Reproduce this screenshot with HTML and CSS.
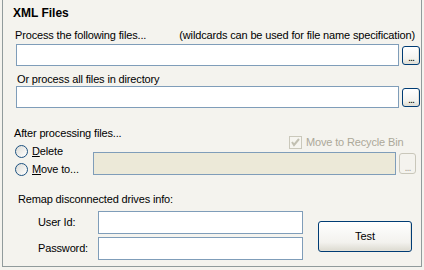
FILE: index.html
```html
<!DOCTYPE html>
<html>
<head>
    <meta charset="utf-8">
    <title>XML Files</title>
    <link rel="stylesheet" href="styles.css">
</head>
<body>
    <div class="panel">
        <div class="title">XML Files</div>

        <div class="label-row">
            <span>Process the following files...</span>
            <span>(wildcards can be used for file name specification)</span>
        </div>
        <div class="field-row">
            <div class="textbox wide"></div>
            <button class="browse">...</button>
        </div>

        <div class="label dir-label">Or process all files in directory</div>
        <div class="field-row dir-row">
            <div class="textbox wide"></div>
            <button class="browse">...</button>
        </div>

        <div class="after">
            <div class="after-left">
                <div class="label">After processing files...</div>
                <label class="radio-row"><span class="radio"></span><span><u>D</u>elete</span></label>
                <label class="radio-row"><span class="radio"></span><span><u>M</u>ove to...</span></label>
            </div>
            <div class="after-right">
                <label class="check-row">
                    <span class="checkbox">
                        <svg width="11" height="11" viewBox="0 0 11 11"><polyline points="2,5 4,8 9,2" fill="none" stroke="#c2c0b2" stroke-width="2"/></svg>
                    </span>
                    <span>Move to Recycle Bin</span>
                </label>
                <div class="move-row">
                    <div class="textbox disabled"></div>
                    <button class="browse disabled">...</button>
                </div>
            </div>
        </div>

        <div class="remap">
            <div class="label">Remap disconnected drives info:</div>
            <div class="remap-grid">
                <span class="field-label">User Id:</span>
                <div class="textbox creds"></div>
                <button class="test">Test</button>
                <span class="field-label">Password:</span>
                <div class="textbox creds"></div>
            </div>
        </div>
    </div>
</body>
</html>
```

FILE: styles.css
```css
body {
    margin: 0;
    background-color: #f4f3ee;
    font-family: 'Liberation Sans', Arial, sans-serif;
    font-size: 11px;
    line-height: 13px;
    letter-spacing: -0.15px;
    color: #000;
}

.panel {
    margin-left: 2px;
    width: 420px;
    height: 267px;
    box-sizing: border-box;
    border: 1px solid #919b9c;
    border-top: none;
}

.title {
    padding: 6px 0 0 10px;
    font-size: 12px;
    line-height: 14px;
    font-weight: bold;
    letter-spacing: 0;
}

.label-row {
    display: flex;
    justify-content: space-between;
    margin-top: 9px;
    padding: 0 6px 0 12px;
}

.label {
    white-space: nowrap;
}

.field-row {
    display: flex;
    align-items: center;
    gap: 3px;
    margin-top: 2px;
    padding-left: 13px;
}

.dir-label {
    margin-top: 7px;
    padding-left: 14px;
}

.dir-row {
    margin-top: 0;
}

.textbox {
    box-sizing: border-box;
    height: 22px;
    border: 1px solid #7f9db9;
    background: #fff;
}

.textbox.wide {
    width: 383px;
}

.textbox.disabled {
    width: 303px;
    height: 23px;
    background: #ece9d8;
}

.textbox.creds {
    width: 205px;
    height: 23px;
}

button {
    font-family: inherit;
    font-size: 11px;
    color: #000;
    padding: 0;
    border: 1px solid #003c74;
    border-radius: 3px;
    background: linear-gradient(#ffffff, #f3f2ee 70%, #dcdad0);
    box-shadow: inset -1px -1px 0 #e3e1d8;
}

.browse {
    width: 18px;
    height: 19px;
    line-height: 9px;
    padding-top: 5px;
    letter-spacing: -1px;
}

.browse.disabled {
    width: 17px;
    height: 21px;
    padding-top: 7px;
    border-color: #c9c7ba;
    color: #aca899;
    background: #f4f3ee;
    box-shadow: none;
}

.after {
    display: grid;
    grid-template-columns: 79px 1fr;
    margin-top: 19px;
    padding-left: 11px;
}

.radio-row {
    display: flex;
    align-items: center;
    gap: 4px;
    height: 18px;
    padding-left: 1px;
}

.radio-row:first-of-type {
    margin-top: 2px;
}

.radio {
    box-sizing: border-box;
    width: 13px;
    height: 13px;
    border: 1px solid #1c5180;
    border-radius: 50%;
    background: linear-gradient(135deg, #dcdcd7, #ffffff);
}

u {
    text-decoration: underline;
}

.check-row {
    display: flex;
    align-items: center;
    gap: 4px;
    height: 13px;
    margin-top: 9px;
    padding-left: 196px;
    color: #aca899;
}

.checkbox {
    box-sizing: border-box;
    width: 13px;
    height: 13px;
    border: 1px solid #cac8bb;
    background: #f6f5f0;
    display: flex;
}

.move-row {
    display: flex;
    align-items: center;
    gap: 3px;
    margin-top: 3px;
}

.remap {
    margin-top: 15px;
    padding-left: 15px;
}

.remap-grid {
    display: grid;
    grid-template-columns: 60px 205px auto;
    grid-template-rows: 23px 23px;
    row-gap: 3px;
    align-items: center;
    margin-top: 5px;
    padding-left: 20px;
}

.test {
    grid-row: 1 / span 2;
    grid-column: 3;
    width: 94px;
    height: 31px;
    margin-left: 15px;
    margin-top: 1px;
}
```
